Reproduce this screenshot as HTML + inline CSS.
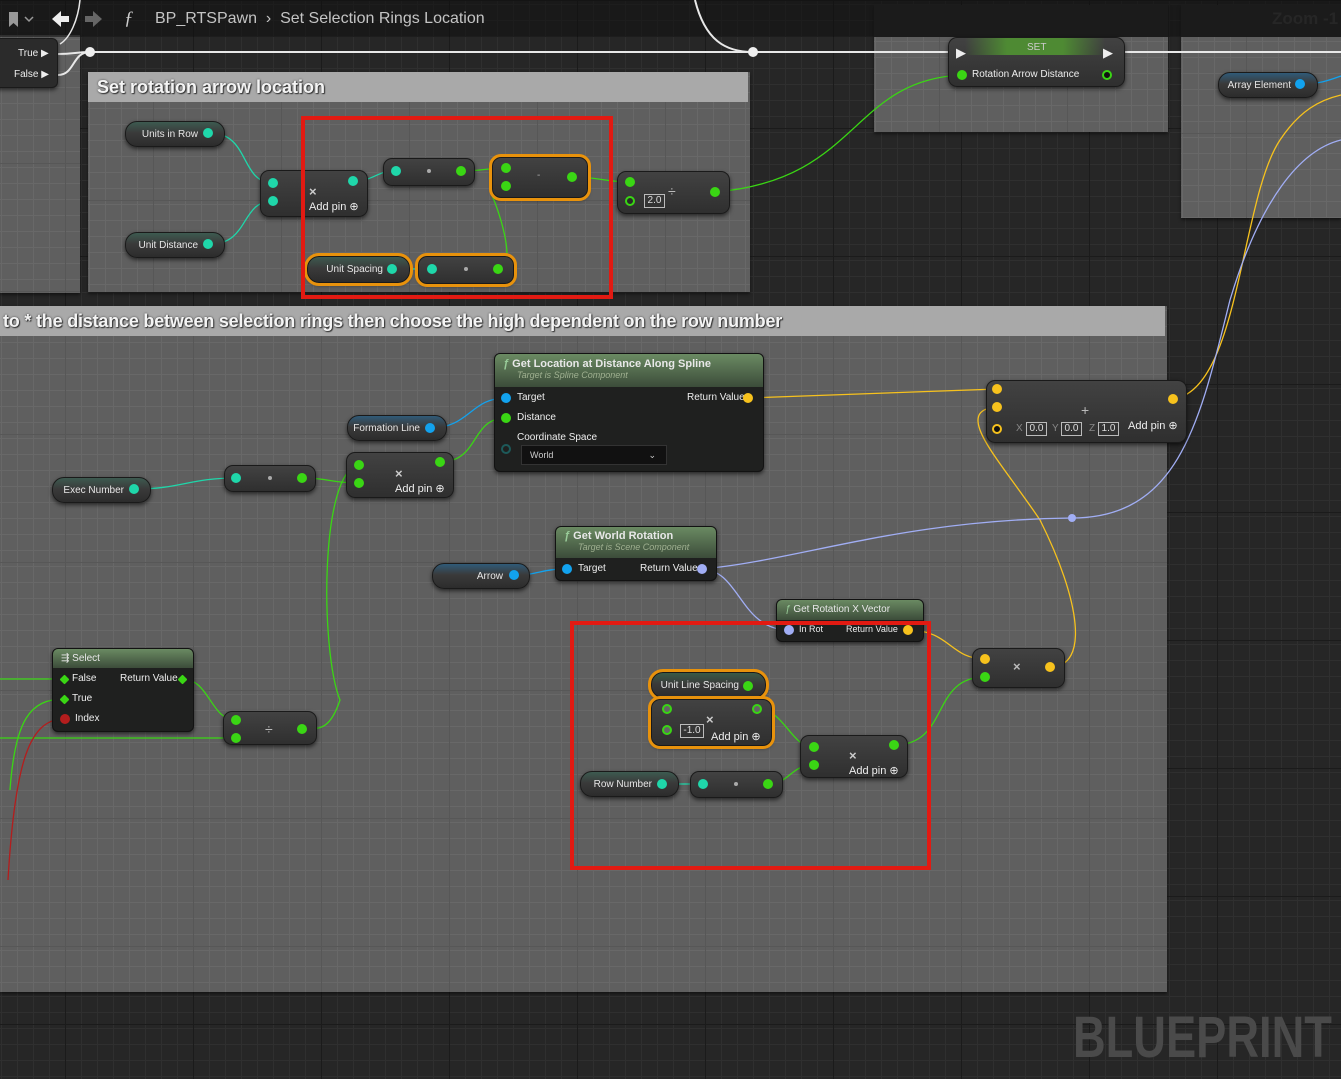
<!DOCTYPE html>
<html><head><meta charset="utf-8"><style>
*{margin:0;padding:0;box-sizing:border-box}
body{width:1341px;height:1079px;overflow:hidden;position:relative;font-family:"Liberation Sans",sans-serif;color:#e8e8e8;
background-color:#262626;
background-image:linear-gradient(#1b1b1b 1px,transparent 1px),linear-gradient(90deg,#1b1b1b 1px,transparent 1px),linear-gradient(#2f2f2f 1px,transparent 1px),linear-gradient(90deg,#2f2f2f 1px,transparent 1px);
background-size:128px 128px,128px 128px,16px 16px,16px 16px;background-position:65px 0,65px 0,1px 4px,1px 4px}
.a{position:absolute}
.cm{position:absolute;background-color:#5f5f5f;
background-image:linear-gradient(#575757 1px,transparent 1px),linear-gradient(90deg,#575757 1px,transparent 1px),linear-gradient(#686868 1px,transparent 1px),linear-gradient(90deg,#686868 1px,transparent 1px);
background-size:128px 128px,128px 128px,16px 16px,16px 16px;background-position:65px 0,65px 0,1px 4px,1px 4px;box-shadow:0 2px 3px rgba(0,0,0,.5)}
.hd{position:absolute;background:#a9a9a9;color:#f4f4f4;font-weight:bold;font-size:18px;text-shadow:1px 1px 1px #333,0 0 2px #444;white-space:nowrap;overflow:hidden;padding-left:9px;line-height:30px}
.n{position:absolute;border-radius:9px;background:linear-gradient(#424242,#2f2f2f);border:1px solid #1a1a1a;box-shadow:0 2px 4px rgba(0,0,0,.6)}
.v{position:absolute;border-radius:12px;background:linear-gradient(#3d5a50 0,#3a3a3a 45%,#2c2c2c);border:1px solid #1a1a1a;box-shadow:0 2px 4px rgba(0,0,0,.6);font-size:10px;line-height:26px;text-align:right;padding-right:26px;color:#e6e6e6}
.vb{background:linear-gradient(#2f5a78 0,#3a3a3a 45%,#2c2c2c)}
.o{outline:3px solid #e8920c;outline-offset:0}
.f{position:absolute;border-radius:6px;background:#1f201f;border:1px solid #121212;box-shadow:0 2px 4px rgba(0,0,0,.6);font-size:10px;color:#e8e8e8}
.fh{position:absolute;left:0;right:0;top:0;border-radius:5px 5px 0 0;background:linear-gradient(#6a8a62,#3c4c3a);font-size:11px;padding-left:8px}
.p{position:absolute;width:10px;height:10px;border-radius:50%;margin:-5px 0 0 -5px}
.t{background:#1fd7aa}.g{background:#3ad614}.b{background:#12a2ee}.y{background:#f7c21d}.l{background:#a1aef5}.r{background:#b41d1d}
.h{background:#2a2a2a;border:2px solid #3ad614}
.x{position:absolute;font-size:10px;white-space:nowrap;color:#eee}
.bx{position:absolute;border:1px solid #bbb;font-size:10px;text-align:center;line-height:12px;height:14px;color:#ddd}
.rb{position:absolute;border:4px solid #e21a12}
</style></head><body>

<div class="cm" style="left:0;top:35px;width:80px;height:258px"></div>
<div class="cm" style="left:88px;top:72px;width:662px;height:220px"></div>
<div class="hd" style="left:88px;top:72px;width:660px;height:30px">Set rotation arrow location</div>
<div class="cm" style="left:874px;top:5px;width:294px;height:127px"></div>
<div class="a" style="left:874px;top:5px;width:294px;height:32px;background:#2a2a2a"></div>
<div class="cm" style="left:1181px;top:5px;width:160px;height:213px"></div>
<div class="a" style="left:1181px;top:5px;width:160px;height:32px;background:#2a2a2a"></div>
<div class="x" style="left:1272px;top:9px;font-size:17px;font-weight:bold;color:#444">Zoom -1</div>
<div class="cm" style="left:0;top:306px;width:1167px;height:686px"></div>
<div class="hd" style="left:0;top:306px;width:1165px;height:30px;padding-left:3px;font-size:18px;letter-spacing:-0.2px">to * the distance between selection rings then choose the high dependent on the row number</div>

<div class="a" style="left:0;top:0;width:1341px;height:37px;background:rgba(14,14,14,.55)"></div>
<svg class="a" style="left:0;top:0" width="120" height="37">
<path d="M9 12 h9 v15 l-4.5-4 -4.5 4z" fill="#999"/><path d="M25 17 l4 4 4-4" stroke="#999" stroke-width="1.5" fill="none"/>
<path d="M52 19 l9-8 v5 h8 v6 h-8 v5z" fill="#eee"/>
<path d="M102 19 l-9-8 v5 h-8 v6 h8 v5z" fill="#666"/>
</svg>
<div class="x" style="left:124px;top:8px;font-size:19px;font-style:italic;font-family:'Liberation Serif',serif;color:#ccc">ƒ</div>
<div class="x" style="left:155px;top:10px;font-size:16px;color:#c4c4c4">BP_RTSPawn &nbsp;›&nbsp; Set Selection Rings Location</div>

<svg class="a" style="left:0;top:0" width="1341" height="1079" fill="none">
<g stroke="#e8e8e8" stroke-width="2"><path d="M58 54 C75 54 75 52 90 52"/><path d="M58 75 C75 75 72 52 90 52"/><path d="M90 52 H1341"/><path d="M695 0 C705 40 725 52 753 52"/><path d="M60 44 C70 38 78 20 80 0" stroke-width="1.5"/></g>
<g stroke="#1fd7aa" stroke-width="1.3"><path d="M210 133 C250 133 240 183 273 183"/><path d="M210 244 C250 244 240 201 273 201"/><path d="M353 181 C375 181 375 171 396 171"/><path d="M392 269 H432"/><path d="M136 489 C180 489 190 478 236 478"/><path d="M662 784 H703"/></g>
<g stroke="#3ad614" stroke-width="1.3"><path d="M461 171 C480 171 490 168 506 168"/><path d="M498 269 C520 269 495 200 492 196"/><path d="M572 177 C600 177 605 182 630 182"/><path d="M715 192 C860 180 850 80 962 75"/><path d="M302 478 C330 478 330 483 359 483"/><path d="M440 462 C480 462 470 418 506 418"/><path d="M359 465 C320 470 320 650 340 700 C330 730 320 729 302 729"/><path d="M182 679 C210 679 210 720 236 720"/><path d="M0 738 H236"/><path d="M0 679 H64"/><path d="M64 699 C30 699 15 720 10 790"/><path d="M748 686 C760 686 740 709 667 709"/><path d="M757 709 C785 709 790 747 814 747"/><path d="M768 784 C790 784 790 765 814 765"/><path d="M894 745 C950 745 930 677 985 677"/></g>
<g stroke="#12a2ee" stroke-width="1.3"><path d="M430 428 C470 428 470 398 506 398"/><path d="M514 575 C540 575 540 569 567 569"/><path d="M1300 84 C1320 84 1330 80 1341 76"/></g>
<g stroke="#f7c21d" stroke-width="1.3"><path d="M748 398 L997 389"/><path d="M908 630 C950 630 950 659 985 659"/><path d="M1050 667 C1090 667 1080 600 1040 520 C1000 460 950 410 997 407"/><path d="M1173 399 C1240 390 1240 200 1280 140 C1300 110 1320 100 1341 95"/></g>
<g stroke="#a1aef5" stroke-width="1.3"><path d="M702 569 C740 570 740 630 789 630"/><path d="M702 569 C800 560 900 520 1072 518 C1180 518 1200 420 1230 300 C1260 200 1300 150 1341 140"/></g>
<path d="M64 719 C30 719 15 760 8 880" stroke="#b41d1d" stroke-width="1.3"/>
<circle cx="90" cy="52" r="5" fill="#eee"/><circle cx="753" cy="52" r="5" fill="#eee"/><circle cx="1072" cy="518" r="4" fill="#a1aef5"/>
</svg>

<div class="n" style="left:-10px;top:38px;width:68px;height:50px;border-radius:6px;background:#2b2b2b"></div>
<div class="x" style="left:18px;top:48px">True ▶</div>
<div class="x" style="left:14px;top:69px">False ▶</div>

<div class="v" style="left:125px;top:121px;width:100px;height:26px">Units in Row</div><div class="p t" style="left:208px;top:133px"></div>
<div class="v" style="left:125px;top:232px;width:100px;height:26px">Unit Distance</div><div class="p t" style="left:208px;top:244px"></div>
<div class="n" style="left:260px;top:170px;width:108px;height:47px"></div>
<div class="p t" style="left:273px;top:183px"></div><div class="p t" style="left:273px;top:201px"></div><div class="p t" style="left:353px;top:181px"></div>
<div class="x" style="left:309px;top:184px;font-size:13px;font-weight:bold;color:#ccc">×</div><div class="x" style="left:309px;top:200px;font-size:11px">Add pin ⊕</div>
<div class="n" style="left:383px;top:158px;width:92px;height:28px"></div>
<div class="p t" style="left:396px;top:171px"></div><div class="p g" style="left:461px;top:171px"></div><div class="p" style="left:429px;top:171px;width:4px;height:4px;margin:-2px;background:#aaa"></div>
<div class="n o" style="left:492px;top:157px;width:96px;height:41px"></div>
<div class="p g" style="left:506px;top:168px"></div><div class="p g" style="left:506px;top:186px"></div><div class="p g" style="left:572px;top:177px"></div>
<div class="x" style="left:537px;top:170px;color:#aaa">-</div>
<div class="v o" style="left:307px;top:256px;width:103px;height:27px">Unit Spacing</div><div class="p t" style="left:392px;top:269px"></div>
<div class="n o" style="left:418px;top:256px;width:96px;height:28px"></div>
<div class="p t" style="left:432px;top:269px"></div><div class="p g" style="left:498px;top:269px"></div><div class="p" style="left:466px;top:269px;width:4px;height:4px;margin:-2px;background:#aaa"></div>
<div class="n" style="left:617px;top:171px;width:113px;height:43px"></div>
<div class="p g" style="left:630px;top:182px"></div><div class="p h" style="left:630px;top:201px"></div><div class="bx" style="left:644px;top:194px;width:21px">2.0</div><div class="x" style="left:668px;top:183px;font-size:14px;color:#bbb">÷</div><div class="p g" style="left:715px;top:192px"></div>
<div class="rb" style="left:301px;top:116px;width:312px;height:183px"></div>

<div class="n" style="left:948px;top:37px;width:177px;height:50px"></div>
<div class="a" style="left:965px;top:38px;width:140px;height:17px;background:linear-gradient(90deg,transparent,#4e8a33 30%,#4e8a33 70%,transparent)"></div>
<div class="x" style="left:1027px;top:42px;color:#ccc">SET</div>
<div class="x" style="left:956px;top:45px;font-size:13px">▶</div><div class="x" style="left:1103px;top:45px;font-size:13px">▶</div>
<div class="p g" style="left:962px;top:75px"></div><div class="x" style="left:972px;top:69px">Rotation Arrow Distance</div>
<div class="p" style="left:1107px;top:75px;background:#111;border:2px solid #3ad614"></div>
<div class="v vb" style="left:1218px;top:72px;width:100px;height:26px">Array Element</div><div class="p b" style="left:1300px;top:84px"></div>

<div class="f" style="left:494px;top:353px;width:270px;height:119px"><div class="fh" style="height:33px"><div style="font-weight:bold;margin-top:4px"><i style="color:#9c9">ƒ</i> Get Location at Distance Along Spline</div><div style="font-size:9px;font-style:italic;color:#9fb090;margin-left:14px">Target is Spline Component</div></div></div>
<div class="p b" style="left:506px;top:398px"></div><div class="x" style="left:517px;top:392px">Target</div>
<div class="x" style="left:687px;top:392px">Return Value</div><div class="p y" style="left:748px;top:398px"></div>
<div class="p g" style="left:506px;top:418px"></div><div class="x" style="left:517px;top:412px">Distance</div>
<div class="x" style="left:517px;top:432px">Coordinate Space</div><div class="p" style="left:506px;top:449px;border:2px solid #1d5a5a"></div>
<div class="a" style="left:521px;top:445px;width:146px;height:20px;background:#111;border:1px solid #333;font-size:9px;line-height:18px;padding-left:8px;color:#ccc">World<span style="position:absolute;right:10px">⌄</span></div>

<div class="v vb" style="left:347px;top:415px;width:100px;height:26px">Formation Line</div><div class="p b" style="left:430px;top:428px"></div>
<div class="v" style="left:52px;top:477px;width:99px;height:26px">Exec Number</div><div class="p t" style="left:134px;top:489px"></div>
<div class="n" style="left:224px;top:465px;width:92px;height:27px"></div>
<div class="p t" style="left:236px;top:478px"></div><div class="p g" style="left:302px;top:478px"></div><div class="p" style="left:270px;top:478px;width:4px;height:4px;margin:-2px;background:#aaa"></div>
<div class="n" style="left:346px;top:452px;width:108px;height:46px"></div>
<div class="p g" style="left:359px;top:465px"></div><div class="p g" style="left:359px;top:483px"></div><div class="p g" style="left:440px;top:462px"></div>
<div class="x" style="left:395px;top:466px;font-size:13px;font-weight:bold;color:#ccc">×</div><div class="x" style="left:395px;top:482px;font-size:11px">Add pin ⊕</div>

<div class="f" style="left:555px;top:526px;width:162px;height:55px"><div class="fh" style="height:31px"><div style="font-weight:bold;margin-top:3px"><i style="color:#9c9">ƒ</i> Get World Rotation</div><div style="font-size:9px;font-style:italic;color:#9fb090;margin-left:14px">Target is Scene Component</div></div></div>
<div class="p b" style="left:567px;top:569px"></div><div class="x" style="left:578px;top:563px">Target</div>
<div class="x" style="left:640px;top:563px">Return Value</div><div class="p l" style="left:702px;top:569px"></div>
<div class="v vb" style="left:432px;top:563px;width:98px;height:26px">Arrow</div><div class="p b" style="left:514px;top:575px"></div>

<div class="f" style="left:776px;top:599px;width:148px;height:43px"><div class="fh" style="height:20px;line-height:19px;font-size:10px"><i style="color:#9c9">ƒ</i> Get Rotation X Vector</div></div>
<div class="p l" style="left:789px;top:630px"></div><div class="x" style="left:799px;top:624px;font-size:9px">In Rot</div>
<div class="x" style="left:846px;top:624px;font-size:9px">Return Value</div><div class="p y" style="left:908px;top:630px"></div>

<div class="n" style="left:986px;top:380px;width:201px;height:63px"></div>
<div class="p y" style="left:997px;top:389px"></div><div class="p y" style="left:997px;top:407px"></div><div class="p" style="left:997px;top:429px;background:#111;border:2px solid #f7c21d"></div>
<div class="x" style="left:1081px;top:402px;font-size:14px;color:#bbb">+</div>
<div class="x" style="left:1016px;top:423px;color:#888">X</div><div class="bx" style="left:1026px;top:422px;width:21px">0.0</div>
<div class="x" style="left:1052px;top:423px;color:#888">Y</div><div class="bx" style="left:1061px;top:422px;width:21px">0.0</div>
<div class="x" style="left:1089px;top:423px;color:#888">Z</div><div class="bx" style="left:1098px;top:422px;width:21px">1.0</div>
<div class="x" style="left:1128px;top:419px;font-size:11px">Add pin ⊕</div>
<div class="p y" style="left:1173px;top:399px"></div>

<div class="n" style="left:972px;top:648px;width:93px;height:40px"></div>
<div class="p y" style="left:985px;top:659px"></div><div class="p g" style="left:985px;top:677px"></div><div class="p y" style="left:1050px;top:667px"></div>
<div class="x" style="left:1013px;top:659px;font-size:13px;font-weight:bold;color:#bbb">×</div>

<div class="f" style="left:52px;top:648px;width:142px;height:84px"><div class="fh" style="height:19px;line-height:19px;font-size:10px">⇶ Select</div></div>
<div class="p g" style="left:64px;top:679px;border-radius:1px;transform:rotate(45deg);width:7px;height:7px;margin:-3px"></div><div class="x" style="left:72px;top:673px">False</div>
<div class="x" style="left:120px;top:673px">Return Value</div><div class="p g" style="left:182px;top:679px;border-radius:1px;transform:rotate(45deg);width:7px;height:7px;margin:-3px"></div>
<div class="p g" style="left:64px;top:699px;border-radius:1px;transform:rotate(45deg);width:7px;height:7px;margin:-3px"></div><div class="x" style="left:72px;top:693px">True</div>
<div class="p r" style="left:65px;top:719px"></div><div class="x" style="left:75px;top:713px">Index</div>

<div class="n" style="left:223px;top:711px;width:94px;height:34px"></div>
<div class="p g" style="left:236px;top:720px"></div><div class="p g" style="left:236px;top:738px"></div><div class="p g" style="left:302px;top:729px"></div>
<div class="x" style="left:265px;top:721px;font-size:14px;color:#bbb">÷</div>

<div class="v o" style="left:651px;top:672px;width:115px;height:26px;background:linear-gradient(#3a5a46,#3a3a3a 45%,#2c2c2c)">Unit Line Spacing</div><div class="p g" style="left:748px;top:686px"></div>
<div class="n o" style="left:651px;top:699px;width:121px;height:47px"></div>
<div class="p" style="left:667px;top:709px;background:#666;border:2px solid #3ad614"></div><div class="p" style="left:667px;top:730px;background:#666;border:2px solid #3ad614"></div><div class="p" style="left:757px;top:709px;background:#666;border:2px solid #3ad614"></div>
<div class="bx" style="left:680px;top:724px;width:24px">-1.0</div>
<div class="x" style="left:706px;top:712px;font-size:13px;font-weight:bold;color:#ccc">×</div><div class="x" style="left:711px;top:730px;font-size:11px">Add pin ⊕</div>
<div class="v" style="left:580px;top:771px;width:99px;height:26px">Row Number</div><div class="p t" style="left:662px;top:784px"></div>
<div class="n" style="left:690px;top:771px;width:93px;height:27px"></div>
<div class="p t" style="left:703px;top:784px"></div><div class="p g" style="left:768px;top:784px"></div><div class="p" style="left:736px;top:784px;width:4px;height:4px;margin:-2px;background:#aaa"></div>
<div class="n" style="left:800px;top:735px;width:108px;height:43px"></div>
<div class="p g" style="left:814px;top:747px"></div><div class="p g" style="left:814px;top:765px"></div><div class="p g" style="left:894px;top:745px"></div>
<div class="x" style="left:849px;top:748px;font-size:13px;font-weight:bold;color:#ccc">×</div><div class="x" style="left:849px;top:764px;font-size:11px">Add pin ⊕</div>
<div class="rb" style="left:570px;top:621px;width:361px;height:249px"></div>

<div class="x" style="left:1073px;top:1006px;font-size:58px;line-height:64px;font-weight:bold;color:#4a4a4a;transform:scaleX(.78);transform-origin:left top">BLUEPRINT</div>
</body></html>
